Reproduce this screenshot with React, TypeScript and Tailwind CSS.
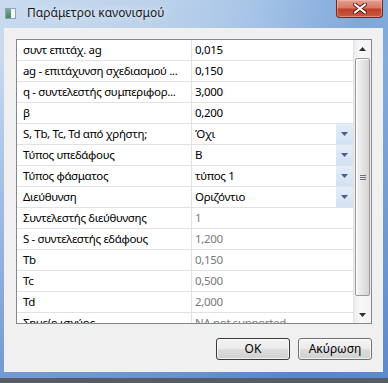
import React from "react";

type Row = { l: string; v: string; dd?: boolean; ro?: boolean };

const rows: Row[] = [
  { l: "συντ επιτάχ. ag", v: "0,015" },
  { l: "ag - επιτάχυνση σχεδιασμού ...", v: "0,150" },
  { l: "q - συντελεστής συμπεριφορ...", v: "3,000" },
  { l: "β", v: "0,200" },
  { l: "S, Tb, Tc, Td από χρήστη;", v: "Όχι", dd: true },
  { l: "Τύπος υπεδάφους", v: "B", dd: true },
  { l: "Τύπος φάσματος", v: "τύπος 1", dd: true },
  { l: "Διεύθυνση", v: "Οριζόντιο", dd: true },
  { l: "Συντελεστής διεύθυνσης", v: "1", ro: true },
  { l: "S - συντελεστής εδάφους", v: "1,200", ro: true },
  { l: "Tb", v: "0,150", ro: true },
  { l: "Tc", v: "0,500", ro: true },
  { l: "Td", v: "2,000", ro: true },
  { l: "Σημείο ισχύος", v: "NA not supported", ro: true },
];

function DropArrow() {
  return (
    <svg width="7" height="4" viewBox="0 0 7 4">
      <polygon points="0,0 7,0 3.5,4" fill="#4d5f7e" />
    </svg>
  );
}

export default function App() {
  return (
    <div
      className="w-[388px] h-[383px] overflow-hidden flex flex-col bg-[linear-gradient(180deg,rgba(70,120,195,0)_0%,rgba(70,120,195,0)_15%,rgba(60,110,190,0.6)_100%),linear-gradient(100deg,#c8daee_0%,#bcd2eb_35%,#a8c5e7_55%,#7ea8da_80%,#8ab2de_100%)]"
      style={{ fontFamily: '"Noto Sans", "Segoe UI", sans-serif' }}
    >
      {/* Title bar */}
      <div className="h-[28px] flex items-start shrink-0">
        <div className="mt-[8px] ml-[5px] w-[11px] h-[11px] border border-[#8aa2bf] bg-white flex">
          <div className="w-[5px] h-full bg-[linear-gradient(180deg,#7fa58a,#3f8a5a)]" />
          <div className="flex-1 bg-[#f4f7fb]" />
        </div>
        <div className="ml-[11px] mt-[5px] text-[12px] leading-[16px] text-[#1a1a1a] [text-shadow:0_0_6px_rgba(255,255,255,0.9)]">
          Παράμετροι κανονισμού
        </div>
        <div className="ml-auto mr-[5px] w-[47px] h-[18px] rounded-b-[4px] border border-t-0 border-[#6b2a22] bg-[linear-gradient(180deg,#e3a090_0%,#d57a66_45%,#c0402c_55%,#c85a3e_100%)] flex items-center justify-center shadow-[inset_0_0_0_1px_rgba(255,200,190,0.45)]">
          <svg width="14" height="11" viewBox="0 0 14 11">
            <path d="M2 1.5 L12 9.5 M12 1.5 L2 9.5" stroke="#5a1a14" strokeWidth="4" strokeLinecap="round" />
            <path d="M2 1.5 L12 9.5 M12 1.5 L2 9.5" stroke="#ffffff" strokeWidth="2.2" strokeLinecap="round" />
          </svg>
        </div>
      </div>

      {/* Client area */}
      <div className="ml-[4px] mr-[5px] h-[344px] shrink-0 bg-[#f0f0f0] pl-[12px] pr-[11px] pt-[11px] flex flex-col">
        <div className="h-[285px] border border-[#828790] bg-white flex">
          <div className="w-[336px] flex flex-col overflow-hidden text-[11.5px] tracking-[-0.35px]">
            {rows.map((r, i) => (
              <div key={i} className="h-[21px] shrink-0 flex border-b border-[#dfe3e8]">
                <div className="w-[175px] shrink-0 border-r border-[#dfe3e8] pl-[6px] flex items-center whitespace-nowrap overflow-hidden text-black">
                  {r.l}
                </div>
                <div className="flex-1 flex items-center pl-[3px]">
                  <span className={"flex-1 whitespace-nowrap overflow-hidden " + (r.ro ? "text-[#7a7a7a]" : "text-black")}>
                    {r.v}
                  </span>
                  {r.dd && (
                    <div className="w-[17px] h-full bg-[linear-gradient(180deg,#e4edf9,#d2e1f3)] flex items-center justify-center">
                      <DropArrow />
                    </div>
                  )}
                </div>
              </div>
            ))}
          </div>
          {/* Scrollbar */}
          <div className="w-[18px] border-l border-[#e3e3e3] bg-[linear-gradient(90deg,#ececec,#f8f8f8_40%,#f2f2f2)] flex flex-col">
            <div className="h-[17px] shrink-0 flex items-center justify-center">
              <svg width="7" height="4" viewBox="0 0 7 4">
                <polygon points="0,4 7,4 3.5,0" fill="#2e2e2e" />
              </svg>
            </div>
            <div className="mt-[1px] ml-[1px] w-[15px] h-[238px] shrink-0 rounded-[2px] border border-[#9a9a9a] bg-[linear-gradient(90deg,#f6f6f6,#e6e6e6_45%,#d4d4d4)] shadow-[inset_1px_1px_0_#ffffff] flex items-center justify-center">
              <div className="flex flex-col gap-[1px]">
                <div className="w-[6px] h-[1px] bg-[#6f6f6f]" />
                <div className="w-[6px] h-[1px] bg-[#6f6f6f]" />
                <div className="w-[6px] h-[1px] bg-[#6f6f6f]" />
              </div>
            </div>
            <div className="flex-1" />
            <div className="h-[17px] shrink-0 flex items-center justify-center">
              <svg width="7" height="4" viewBox="0 0 7 4">
                <polygon points="0,0 7,0 3.5,4" fill="#2e2e2e" />
              </svg>
            </div>
          </div>
        </div>

        {/* Buttons */}
        <div className="mt-[14px] flex justify-end gap-[8px] text-[12px] text-black">
          <button className="w-[74px] h-[22px] rounded-[3px] border border-[#3a3a3a] bg-[linear-gradient(180deg,#f4f4f4_0%,#ebebeb_50%,#dddddd_51%,#d0d0d0_100%)] shadow-[inset_0_0_0_1px_rgba(255,255,255,0.7)] flex items-center justify-center">
            OK
          </button>
          <button className="w-[74px] h-[22px] rounded-[3px] border border-[#707070] bg-[linear-gradient(180deg,#f4f4f4_0%,#ebebeb_50%,#dddddd_51%,#d0d0d0_100%)] shadow-[inset_0_0_0_1px_rgba(255,255,255,0.7)] flex items-center justify-center">
            Ακύρωση
          </button>
        </div>
      </div>

      {/* Bottom frame */}
      <div className="h-[6px] shrink-0" />
      <div className="flex-1 bg-[#555c66]" />
    </div>
  );
}
